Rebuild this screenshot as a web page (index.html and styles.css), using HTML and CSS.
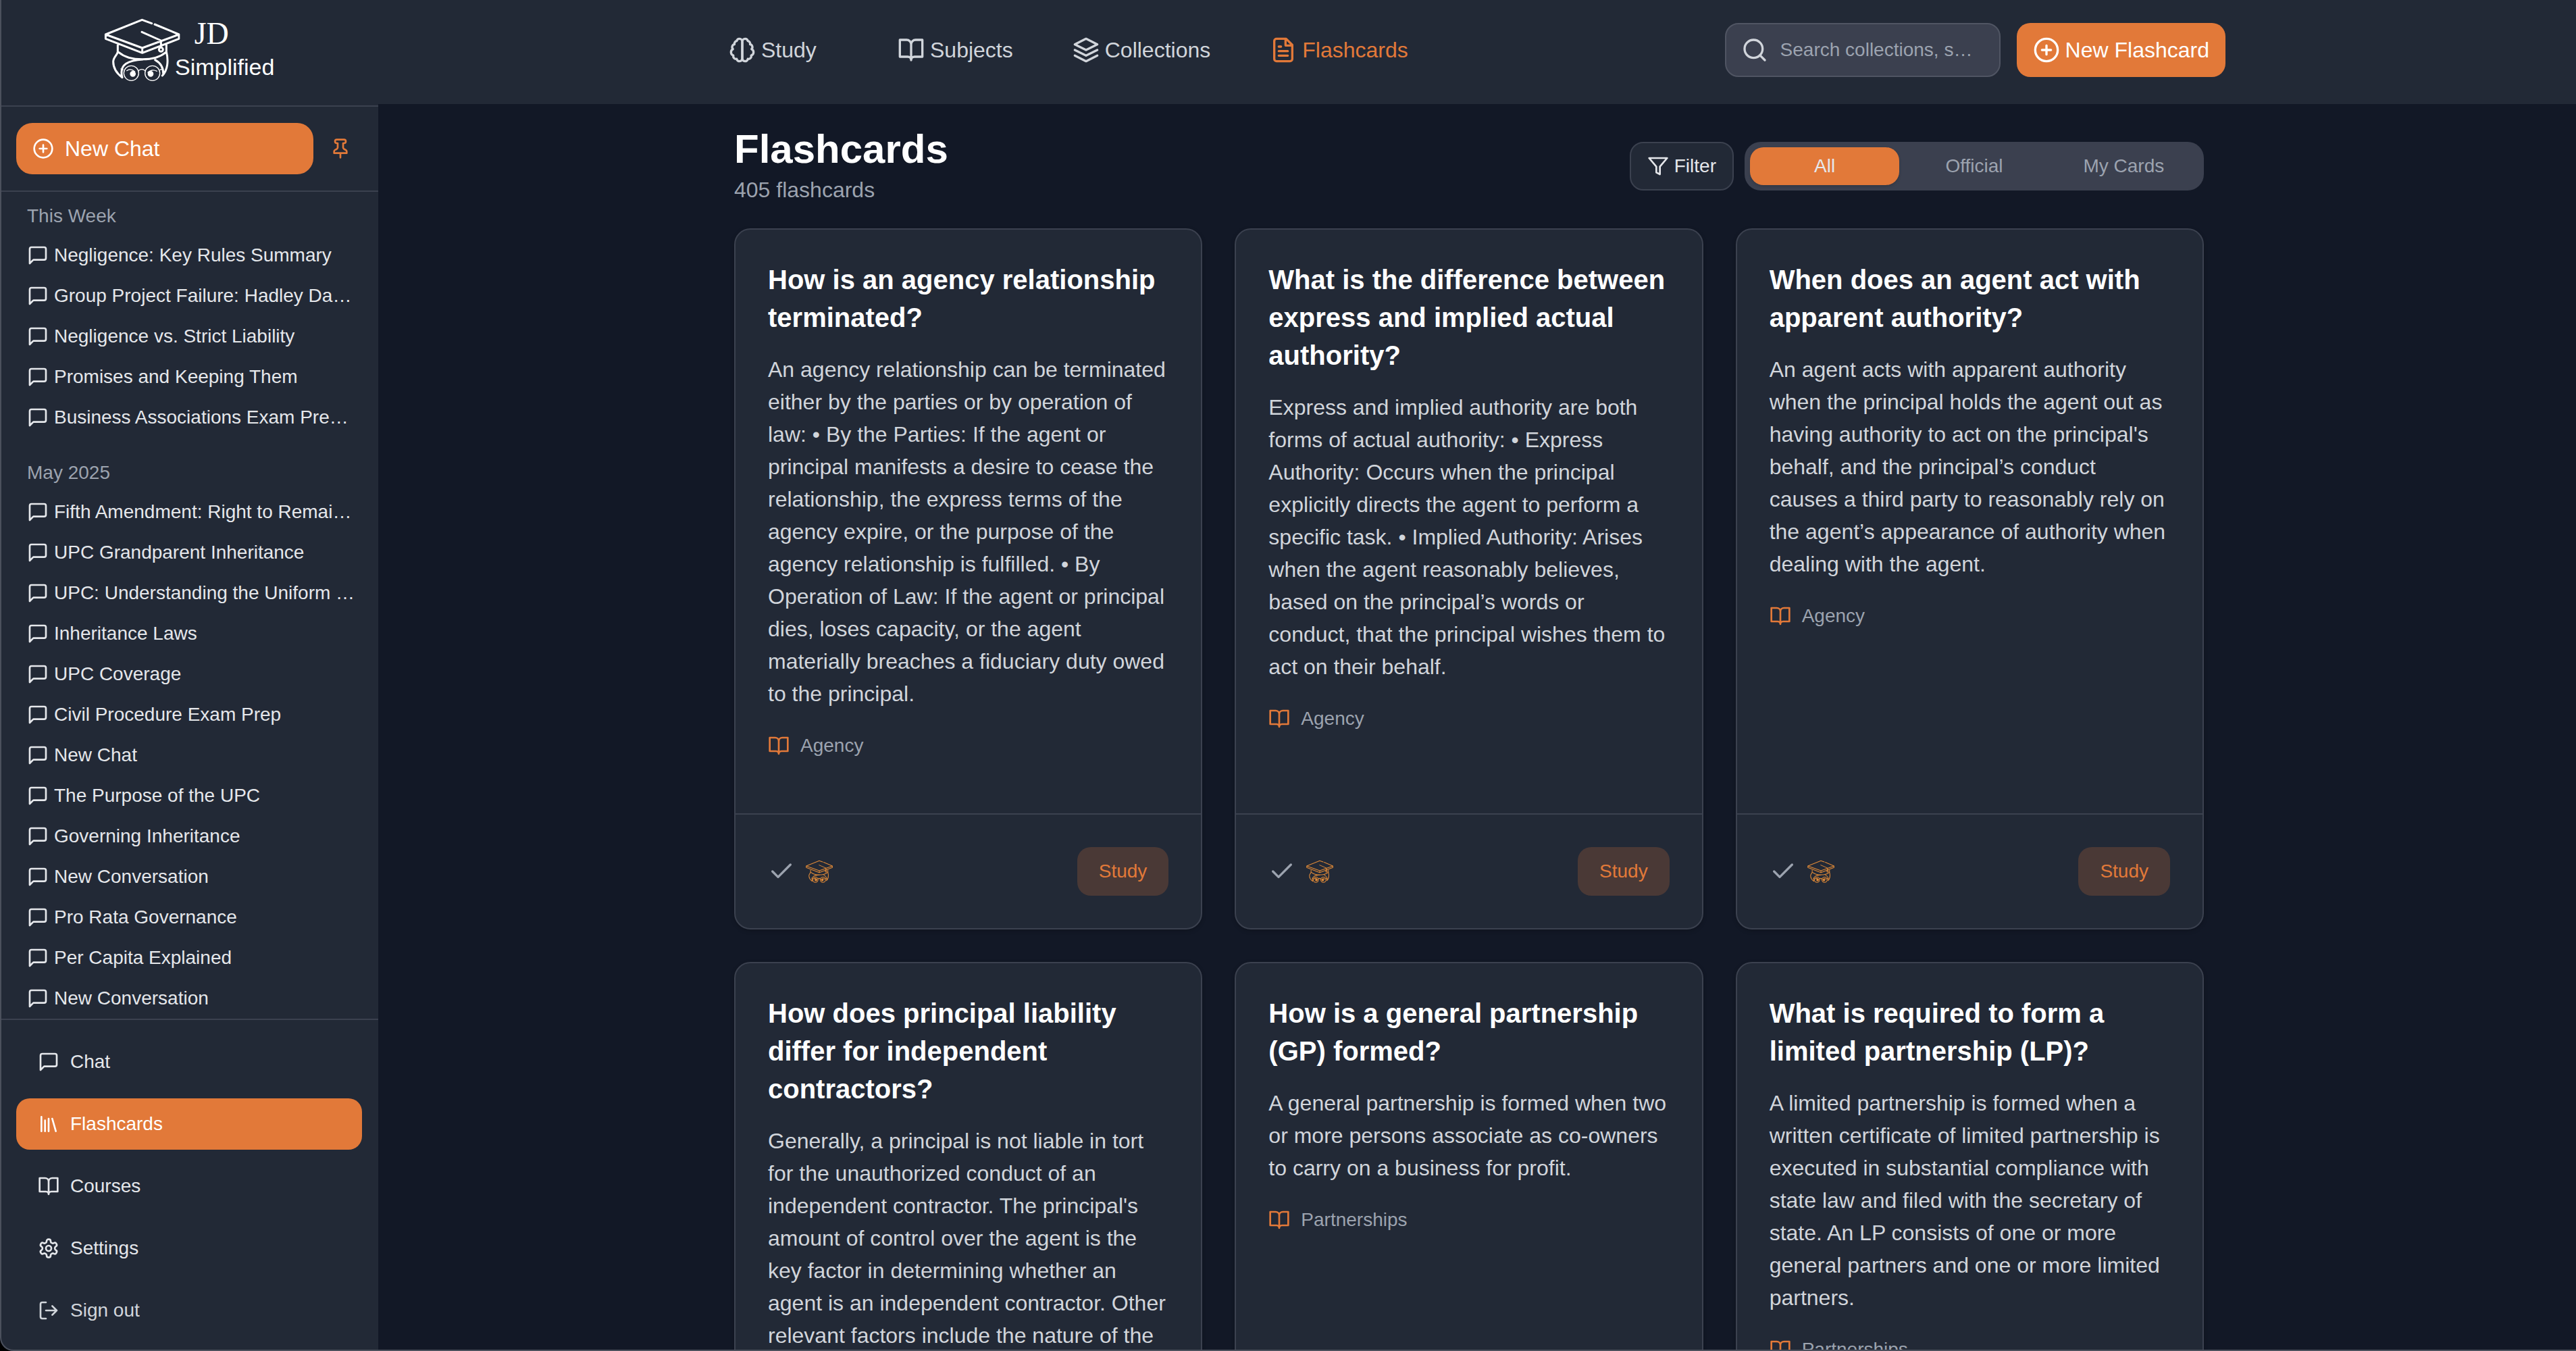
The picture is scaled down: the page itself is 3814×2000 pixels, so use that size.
FILE: index.html
```html
<!DOCTYPE html>
<html lang="en">
<head>
<meta charset="utf-8">
<title>JD Simplified - Flashcards</title>
<link rel="stylesheet" href="styles.css">
</head>
<body>
<svg class="sprite" aria-hidden="true">
  <symbol id="plus-circle" viewBox="0 0 24 24"><circle cx="12" cy="12" r="10"/><path d="M8 12h8M12 8v8"/></symbol>
  <symbol id="pin" viewBox="0 0 24 24"><path d="M12 17v5M5 17h14v-1.76a2 2 0 0 0-1.11-1.79l-1.78-.9A2 2 0 0 1 15 10.76V6h1a2 2 0 0 0 0-4H8a2 2 0 0 0 0 4h1v4.76a2 2 0 0 1-1.11 1.79l-1.78.9A2 2 0 0 0 5 15.24Z"/></symbol>
  <symbol id="message" viewBox="0 0 24 24"><path d="M21 15a2 2 0 0 1-2 2H7l-4 4V5a2 2 0 0 1 2-2h14a2 2 0 0 1 2 2z"/></symbol>
  <symbol id="library" viewBox="0 0 24 24"><path d="m16 6 4 14M12 6v14M8 8v12M4 4v16"/></symbol>
  <symbol id="book" viewBox="0 0 24 24"><path d="M2 3h6a4 4 0 0 1 4 4v14a3 3 0 0 0-3-3H2zM22 3h-6a4 4 0 0 0-4 4v14a3 3 0 0 1 3-3h7z"/></symbol>
  <symbol id="settings" viewBox="0 0 24 24"><path d="M12.22 2h-.44a2 2 0 0 0-2 2v.18a2 2 0 0 1-1 1.73l-.43.25a2 2 0 0 1-2 0l-.15-.08a2 2 0 0 0-2.73.73l-.22.38a2 2 0 0 0 .73 2.73l.15.1a2 2 0 0 1 1 1.72v.51a2 2 0 0 1-1 1.74l-.15.09a2 2 0 0 0-.73 2.73l.22.38a2 2 0 0 0 2.73.73l.15-.08a2 2 0 0 1 2 0l.43.25a2 2 0 0 1 1 1.73V20a2 2 0 0 0 2 2h.44a2 2 0 0 0 2-2v-.18a2 2 0 0 1 1-1.73l.43-.25a2 2 0 0 1 2 0l.15.08a2 2 0 0 0 2.73-.73l.22-.39a2 2 0 0 0-.73-2.73l-.15-.08a2 2 0 0 1-1-1.74v-.5a2 2 0 0 1 1-1.74l.15-.09a2 2 0 0 0 .73-2.73l-.22-.38a2 2 0 0 0-2.73-.73l-.15.08a2 2 0 0 1-2 0l-.43-.25a2 2 0 0 1-1-1.73V4a2 2 0 0 0-2-2z"/><circle cx="12" cy="12" r="3"/></symbol>
  <symbol id="log-out" viewBox="0 0 24 24"><path d="M9 21H5a2 2 0 0 1-2-2V5a2 2 0 0 1 2-2h4M16 17l5-5-5-5M21 12H9"/></symbol>
  <symbol id="brain" viewBox="0 0 24 24"><path d="M9.5 2A2.5 2.5 0 0 1 12 4.5v15a2.5 2.5 0 0 1-4.96.44 2.5 2.5 0 0 1-2.96-3.08 3 3 0 0 1-.34-5.58 2.5 2.5 0 0 1 1.32-4.24 2.5 2.5 0 0 1 1.98-3A2.5 2.5 0 0 1 9.5 2Z"/><path d="M14.5 2A2.5 2.5 0 0 0 12 4.5v15a2.5 2.5 0 0 0 4.96.44 2.5 2.5 0 0 0 2.96-3.08 3 3 0 0 0 .34-5.58 2.5 2.5 0 0 0-1.32-4.24 2.5 2.5 0 0 0-1.98-3A2.5 2.5 0 0 0 14.5 2Z"/></symbol>
  <symbol id="layers" viewBox="0 0 24 24"><path d="M12 2 2 7l10 5 10-5zM2 17l10 5 10-5M2 12l10 5 10-5"/></symbol>
  <symbol id="file-text" viewBox="0 0 24 24"><path d="M14.5 2H6a2 2 0 0 0-2 2v16a2 2 0 0 0 2 2h12a2 2 0 0 0 2-2V7.5zM14 2v6h6M16 13H8M16 17H8M10 9H8"/></symbol>
  <symbol id="search" viewBox="0 0 24 24"><circle cx="11" cy="11" r="8"/><path d="m21 21-4.3-4.3"/></symbol>
  <symbol id="filter" viewBox="0 0 24 24"><path d="M22 3H2l8 9.46V19l4 2v-8.54z"/></symbol>
  <symbol id="check" viewBox="0 0 24 24"><path d="M20 6 9 17l-5-5"/></symbol>
  <symbol id="scholar" viewBox="28 22 337 278">
    <path class="thick" d="M239 44 196 28 34 93v19l163 63 163-63V93L252 48M34 93l163 60 163-60M197 153v22M195 82l85 38v30M88 134v36c-2 14-20 24-20 44 0 32 18 54 40 70M304 134v36c10 40 6 82-18 106M92 172c50 42 160 42 210 0M108 284c-16-60 30-76 92-80M254 206c28 16 38 36 36 66"/>
    <circle class="thick" cx="280" cy="160" r="9"/>
    <circle cx="148" cy="265" r="33"/><circle cx="242" cy="265" r="33"/>
    <path d="M180 254c10-8 20-8 30 0M112 250l-10-4M276 250l12-4M128 254c10-8 24-6 36 4M222 262c12-12 28-12 40-6"/>
    <circle class="solid" cx="155" cy="268" r="11"/><circle class="solid" cx="234" cy="268" r="11"/>
  </symbol>
</svg>

<div class="app">
  <aside class="sidebar">
    <a class="logo" href="#">
      <svg class="logo-art" viewBox="0 0 810 330" role="img" aria-label="JD Simplified">
        <use href="#scholar" x="28" y="22" width="337" height="278"/>
        <text class="logo-initials" x="428" y="134">JD</text>
        <text class="logo-word" x="342" y="272">Simplified</text>
      </svg>
    </a>
    <div class="new-chat-row">
      <button class="new-chat" type="button"><svg class="icon"><use href="#plus-circle"/></svg>New Chat</button>
      <button class="pin" type="button" aria-label="Unpin sidebar"><svg class="icon"><use href="#pin"/></svg></button>
    </div>
    <nav class="history" aria-label="Chat history">
      <section class="history-group">
        <h2>This Week</h2>
        <a href="#"><svg class="icon"><use href="#message"/></svg>Negligence: Key Rules Summary</a>
        <a href="#"><svg class="icon"><use href="#message"/></svg>Group Project Failure: Hadley Da…</a>
        <a href="#"><svg class="icon"><use href="#message"/></svg>Negligence vs. Strict Liability</a>
        <a href="#"><svg class="icon"><use href="#message"/></svg>Promises and Keeping Them</a>
        <a href="#"><svg class="icon"><use href="#message"/></svg>Business Associations Exam Pre…</a>
      </section>
      <section class="history-group">
        <h2>May 2025</h2>
        <a href="#"><svg class="icon"><use href="#message"/></svg>Fifth Amendment: Right to Remai…</a>
        <a href="#"><svg class="icon"><use href="#message"/></svg>UPC Grandparent Inheritance</a>
        <a href="#"><svg class="icon"><use href="#message"/></svg>UPC: Understanding the Uniform …</a>
        <a href="#"><svg class="icon"><use href="#message"/></svg>Inheritance Laws</a>
        <a href="#"><svg class="icon"><use href="#message"/></svg>UPC Coverage</a>
        <a href="#"><svg class="icon"><use href="#message"/></svg>Civil Procedure Exam Prep</a>
        <a href="#"><svg class="icon"><use href="#message"/></svg>New Chat</a>
        <a href="#"><svg class="icon"><use href="#message"/></svg>The Purpose of the UPC</a>
        <a href="#"><svg class="icon"><use href="#message"/></svg>Governing Inheritance</a>
        <a href="#"><svg class="icon"><use href="#message"/></svg>New Conversation</a>
        <a href="#"><svg class="icon"><use href="#message"/></svg>Pro Rata Governance</a>
        <a href="#"><svg class="icon"><use href="#message"/></svg>Per Capita Explained</a>
        <a href="#"><svg class="icon"><use href="#message"/></svg>New Conversation</a>
      </section>
    </nav>
    <nav class="side-nav" aria-label="Sections">
      <a href="#"><svg class="icon"><use href="#message"/></svg>Chat</a>
      <a class="active" href="#" aria-current="page"><svg class="icon"><use href="#library"/></svg>Flashcards</a>
      <a href="#"><svg class="icon"><use href="#book"/></svg>Courses</a>
      <a href="#"><svg class="icon"><use href="#settings"/></svg>Settings</a>
      <a class="muted" href="#"><svg class="icon"><use href="#log-out"/></svg>Sign out</a>
    </nav>
  </aside>

  <div class="page">
    <header class="topbar">
      <div class="topbar-inner">
        <nav class="top-nav" aria-label="Main">
          <a href="#"><svg class="icon large"><use href="#brain"/></svg>Study</a>
          <a href="#"><svg class="icon large"><use href="#book"/></svg>Subjects</a>
          <a href="#"><svg class="icon large"><use href="#layers"/></svg>Collections</a>
          <a class="active" href="#" aria-current="page"><svg class="icon large"><use href="#file-text"/></svg>Flashcards</a>
        </nav>
        <div class="top-actions">
          <label class="search"><svg class="icon large"><use href="#search"/></svg><input type="text" placeholder="Search collections, s…" aria-label="Search collections"></label>
          <button class="new-card" type="button"><svg class="icon large"><use href="#plus-circle"/></svg>New Flashcard</button>
        </div>
      </div>
    </header>

    <main class="content">
      <div class="container">
        <div class="heading">
          <div class="heading-text">
            <h1>Flashcards</h1>
            <p class="count">405 flashcards</p>
          </div>
          <div class="tools">
            <button class="filter" type="button"><svg class="icon"><use href="#filter"/></svg>Filter</button>
            <div class="segments">
              <button class="active" type="button" aria-pressed="true">All</button>
              <button type="button" aria-pressed="false">Official</button>
              <button type="button" aria-pressed="false">My Cards</button>
            </div>
          </div>
        </div>

        <div class="cards">
          <article class="card">
            <div class="card-body">
              <h3>How is an agency relationship terminated?</h3>
              <p>An agency relationship can be terminated either by the parties or by operation of law: • By the Parties: If the agent or principal manifests a desire to cease the relationship, the express terms of the agency expire, or the purpose of the agency relationship is fulfilled. • By Operation of Law: If the agent or principal dies, loses capacity, or the agent materially breaches a fiduciary duty owed to the principal.</p>
              <div class="subject"><svg class="icon"><use href="#book"/></svg>Agency</div>
            </div>
            <footer class="card-foot">
              <svg class="icon large check"><use href="#check"/></svg><svg class="scholar"><use href="#scholar"/></svg>
              <button class="study" type="button">Study</button>
            </footer>
          </article>
          <article class="card">
            <div class="card-body">
              <h3>What is the difference between express and implied actual authority?</h3>
              <p>Express and implied authority are both forms of actual authority: • Express Authority: Occurs when the principal explicitly directs the agent to perform a specific task. • Implied Authority: Arises when the agent reasonably believes, based on the principal’s words or conduct, that the principal wishes them to act on their behalf.</p>
              <div class="subject"><svg class="icon"><use href="#book"/></svg>Agency</div>
            </div>
            <footer class="card-foot">
              <svg class="icon large check"><use href="#check"/></svg><svg class="scholar"><use href="#scholar"/></svg>
              <button class="study" type="button">Study</button>
            </footer>
          </article>
          <article class="card">
            <div class="card-body">
              <h3>When does an agent act with apparent authority?</h3>
              <p>An agent acts with apparent authority when the principal holds the agent out as having authority to act on the principal's behalf, and the principal’s conduct causes a third party to reasonably rely on the agent’s appearance of authority when dealing with the agent.</p>
              <div class="subject"><svg class="icon"><use href="#book"/></svg>Agency</div>
            </div>
            <footer class="card-foot">
              <svg class="icon large check"><use href="#check"/></svg><svg class="scholar"><use href="#scholar"/></svg>
              <button class="study" type="button">Study</button>
            </footer>
          </article>
          <article class="card">
            <div class="card-body">
              <h3>How does principal liability differ for independent contractors?</h3>
              <p>Generally, a principal is not liable in tort for the unauthorized conduct of an independent contractor. The principal's amount of control over the agent is the key factor in determining whether an agent is an independent contractor. Other relevant factors include the nature of the</p>
              <div class="subject"><svg class="icon"><use href="#book"/></svg>Agency</div>
            </div>
            <footer class="card-foot">
              <svg class="icon large check"><use href="#check"/></svg><svg class="scholar"><use href="#scholar"/></svg>
              <button class="study" type="button">Study</button>
            </footer>
          </article>
          <article class="card">
            <div class="card-body">
              <h3>How is a general partnership (GP) formed?</h3>
              <p>A general partnership is formed when two or more persons associate as co-owners to carry on a business for profit.</p>
              <div class="subject"><svg class="icon"><use href="#book"/></svg>Partnerships</div>
            </div>
            <footer class="card-foot">
              <svg class="icon large check"><use href="#check"/></svg><svg class="scholar"><use href="#scholar"/></svg>
              <button class="study" type="button">Study</button>
            </footer>
          </article>
          <article class="card">
            <div class="card-body">
              <h3>What is required to form a limited partnership (LP)?</h3>
              <p>A limited partnership is formed when a written certificate of limited partnership is executed in substantial compliance with state law and filed with the secretary of state. An LP consists of one or more general partners and one or more limited partners.</p>
              <div class="subject"><svg class="icon"><use href="#book"/></svg>Partnerships</div>
            </div>
            <footer class="card-foot">
              <svg class="icon large check"><use href="#check"/></svg><svg class="scholar"><use href="#scholar"/></svg>
              <button class="study" type="button">Study</button>
            </footer>
          </article>
        </div>
      </div>
    </main>
  </div>
</div>
</body>
</html>
```
FILE: styles.css
```css
:root {
  --bg: #121826;
  --panel: #222936;
  --line: #3b414f;
  --field: #3b404f;
  --accent: #e27939;
  --text: #e5e7eb;
  --soft: #d1d5db;
  --dim: #9ca3af;
}

* { box-sizing: border-box; }

html { background: #000; }

body {
  margin: 0;
  font-family: "Liberation Sans", Arial, sans-serif;
  font-size: 28px;
  line-height: 40px;
  color: var(--text);
}

h1, h2, h3, p { margin: 0; }
a { color: inherit; text-decoration: none; }
button, input { font: inherit; color: inherit; border: 0; background: none; padding: 0; margin: 0; }
button { cursor: pointer; }

.sprite { position: absolute; width: 0; height: 0; }

.icon {
  flex: none;
  width: 32px;
  height: 32px;
  fill: none;
  stroke: currentColor;
  stroke-width: 2;
  stroke-linecap: round;
  stroke-linejoin: round;
}
.icon.large { width: 40px; height: 40px; }

.app {
  position: relative;
  display: flex;
  height: 100vh;
  overflow: hidden;
  background: var(--bg);
  border-bottom-left-radius: 20px;
}

/* window edge drawn above every panel */
.app::after {
  content: "";
  position: absolute;
  inset: 0;
  border: solid #4b505c;
  border-width: 0 0 2px 2px;
  border-bottom-left-radius: 20px;
  pointer-events: none;
}

/* Sidebar */
.sidebar {
  flex: none;
  display: flex;
  flex-direction: column;
  width: 560px;
  background: var(--panel);
}

.logo {
  flex: none;
  display: flex;
  justify-content: center;
  padding: 20px 0 26px;
  border-bottom: 2px solid var(--line);
  color: #fff;
}
.logo-art {
  width: 270px;
  height: 110px;
  fill: none;
  stroke: #fff;
  stroke-width: 4;
  stroke-linecap: round;
  stroke-linejoin: round;
}
.thick { stroke-width: 9; }
.solid { fill: currentColor; }
.logo-initials, .logo-word { fill: #fff; stroke: none; }
.logo-initials { font-family: "Liberation Serif", serif; font-size: 138px; }
.logo-word { font-family: "Liberation Sans Narrow", "Liberation Sans", sans-serif; font-size: 102px; }

.new-chat-row {
  flex: none;
  display: flex;
  align-items: center;
  gap: 24px;
  padding: 24px;
  border-bottom: 2px solid var(--line);
}
.new-chat {
  flex: 1;
  display: flex;
  align-items: center;
  gap: 16px;
  height: 76px;
  padding: 0 24px;
  border-radius: 24px;
  background: var(--accent);
  color: #fff;
  font-size: 32px;
}
.pin {
  display: flex;
  width: 48px;
  color: var(--accent);
}

.history {
  flex: 1;
  min-height: 0;
  overflow: hidden;
  padding: 16px 24px;
}
.history-group { margin-bottom: 32px; }
.history-group h2 {
  margin-bottom: 8px;
  padding-left: 16px;
  font-size: 28px;
  font-weight: 400;
  color: var(--dim);
}
.history-group a {
  display: flex;
  align-items: center;
  gap: 8px;
  height: 60px;
  padding-left: 16px;
  white-space: nowrap;
}

.side-nav {
  flex: none;
  display: flex;
  flex-direction: column;
  gap: 16px;
  padding: 24px 24px 22px;
  border-top: 2px solid var(--line);
}
.side-nav a {
  display: flex;
  align-items: center;
  gap: 16px;
  height: 76px;
  padding: 0 32px;
  border-radius: 20px;
}
.side-nav .active { background: var(--accent); color: #fff; }
.side-nav .muted { color: var(--soft); }

/* Top bar */
.page {
  flex: 1;
  min-width: 0;
  display: flex;
  flex-direction: column;
}
.topbar {
  flex: none;
  padding: 34px 48px 40px;
  background: var(--panel);
}
.topbar-inner {
  display: flex;
  align-items: center;
  justify-content: space-between;
  max-width: 2216px;
  margin: 0 auto;
}
.top-nav {
  display: flex;
  gap: 88px;
  font-size: 32px;
  color: var(--soft);
}
.top-nav a {
  display: flex;
  align-items: center;
  gap: 8px;
  min-width: 162px;
}
.top-nav .active { color: var(--accent); }

.top-actions { display: flex; gap: 24px; }
.search {
  display: flex;
  align-items: center;
  gap: 18px;
  width: 408px;
  height: 80px;
  padding: 0 22px;
  border: 2px solid #505563;
  border-radius: 20px;
  background: var(--field);
  color: var(--soft);
}
.search input { flex: 1; min-width: 0; height: 40px; outline: 0; }
.search input::placeholder { color: var(--dim); opacity: 1; }
.new-card {
  display: flex;
  align-items: center;
  gap: 8px;
  height: 80px;
  padding: 0 24px;
  border-radius: 20px;
  background: var(--accent);
  color: #fff;
  font-size: 32px;
}

/* Main area */
.content {
  flex: 1;
  min-height: 0;
  overflow: hidden;
  padding: 28px 24px 0 0;
}
.container {
  max-width: 2304px;
  margin: 0 auto;
  padding: 0 64px;
}
.heading {
  display: flex;
  align-items: center;
  justify-content: space-between;
  min-height: 128px;
  margin-bottom: 28px;
}
.heading-text { align-self: flex-start; }
h1 {
  font-size: 60px;
  line-height: 78px;
  color: #fff;
}
.count {
  font-size: 32px;
  line-height: 42px;
  color: var(--dim);
}
.tools { display: flex; gap: 16px; }
.filter {
  display: flex;
  align-items: center;
  gap: 8px;
  height: 72px;
  padding: 0 24px;
  border: 2px solid var(--line);
  border-radius: 20px;
  background: var(--panel);
}
.segments {
  display: grid;
  grid-template-columns: repeat(3, 1fr);
  width: 680px;
  height: 72px;
  padding: 8px;
  border-radius: 24px;
  background: var(--field);
  color: var(--dim);
}
.segments button { border-radius: 20px; }
.segments .active {
  background: var(--accent);
  color: var(--text);
  box-shadow: 0 2px 4px rgba(0, 0, 0, .15);
}

.cards {
  display: grid;
  grid-template-columns: repeat(3, 1fr);
  gap: 48px;
}
.card {
  display: flex;
  flex-direction: column;
  border: 2px solid var(--line);
  border-radius: 24px;
  background: var(--panel);
  box-shadow: 0 2px 6px rgba(0, 0, 0, .2);
}
.card-body { flex: 1; padding: 46px 48px 80px; }
.card h3 {
  margin-bottom: 25px;
  font-size: 40px;
  line-height: 56px;
  color: #fff;
}
.card p {
  font-size: 32px;
  line-height: 48px;
  color: var(--soft);
}
.subject {
  display: flex;
  align-items: center;
  gap: 16px;
  margin-top: 33px;
  color: var(--dim);
}
.subject .icon { color: var(--accent); }
.card-foot {
  display: flex;
  align-items: center;
  gap: 16px;
  padding: 48px;
  border-top: 2px solid var(--line);
}
.check { color: var(--dim); }
.scholar {
  width: 40px;
  height: 34px;
  fill: none;
  color: #e08a38;
  stroke: currentColor;
  stroke-width: 9;
  stroke-linecap: round;
  stroke-linejoin: round;
}
.study {
  height: 72px;
  margin-left: auto;
  padding: 0 32px;
  border-radius: 20px;
  background: #4a3936;
  color: var(--accent);
}
```
